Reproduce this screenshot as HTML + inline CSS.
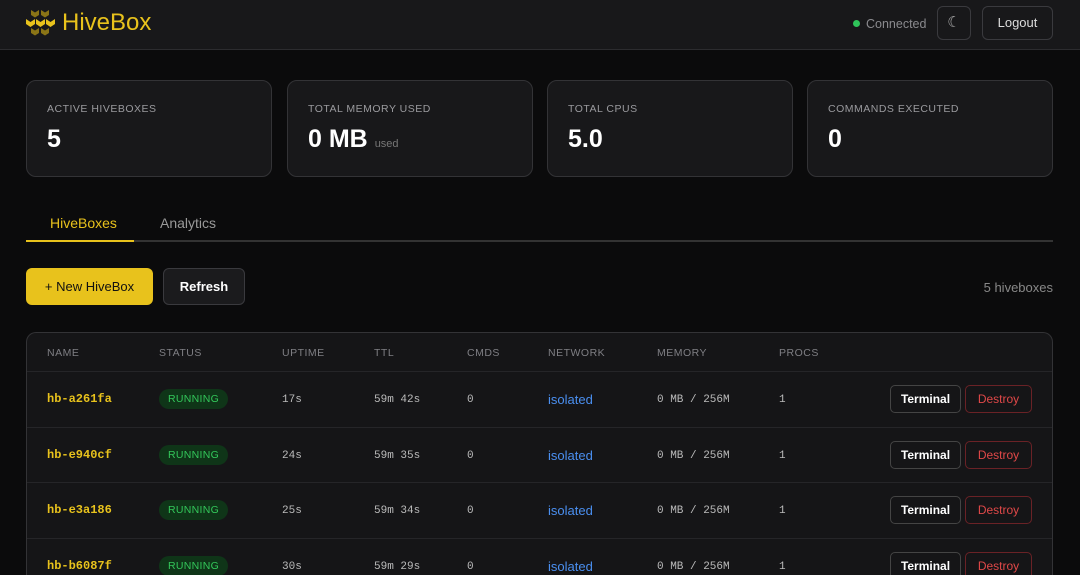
<!DOCTYPE html>
<html style="overflow:hidden;height:575px"><head><style>
*{box-sizing:border-box;margin:0;padding:0}
body{width:1080px;height:575px;overflow:hidden;background:#0b0b0c;font-family:"Liberation Sans",sans-serif;color:#eee;position:relative}
.hdr{height:50px;background:#18181a;border-bottom:1px solid #2c2c2f;position:relative}
.logo{position:absolute;left:26px;top:9px;display:flex;align-items:center}
.logo span{color:#e8c21c;font-size:24px;margin-left:6px}
.conn{position:absolute;left:853px;top:17px;font-size:12.5px;color:#8a8a8e}
.conn i{display:inline-block;width:7px;height:7px;border-radius:50%;background:#2fc45a;margin-right:6px;vertical-align:1px}
.btnm{position:absolute;left:937px;top:6px;width:34px;height:34px;border:1px solid #3a3a3e;border-radius:6px;color:#aaa;text-align:center;line-height:32px;font-size:15px}
.lo{position:absolute;left:982px;top:6px;width:71px;height:34px;border:1px solid #3a3a3e;border-radius:6px;color:#ddd;text-align:center;line-height:32px;font-size:13px}
.card{position:absolute;top:80px;width:246px;height:97px;background:#18181a;border:1px solid #333336;border-radius:10px;padding:22px 20px}
.card .l{font-size:10.5px;letter-spacing:.5px;color:#9a9a9e}
.card .v{font-size:25px;font-weight:bold;margin-top:10px;color:#fff}
.card .v small{font-size:11px;color:#777;font-weight:normal}
.tabs{position:absolute;left:26px;top:206px;width:1027px;height:36px;border-bottom:2px solid #333}
.tab{position:absolute;top:9px;font-size:14px}
.b1{position:absolute;left:26px;top:268px;width:127px;height:37px;background:#e8c21c;border-radius:6px;color:#111;font-size:13px;text-align:center;line-height:37px}
.b2{position:absolute;left:163px;top:268px;width:82px;height:37px;background:#1b1b1d;border:1px solid #3a3a3e;border-radius:6px;color:#fff;font-size:13px;font-weight:bold;text-align:center;line-height:35px}
.cnt{position:absolute;right:27px;top:280px;font-size:13px;color:#888}
.tbl{position:absolute;left:26px;top:332px;width:1027px;height:243px;background:#151517;border:1px solid #333336;border-bottom:none;border-radius:10px 10px 0 0;overflow:hidden}
.row{position:absolute;left:0;width:100%;border-bottom:1px solid #252528}
.row div{position:absolute}
.th{font-size:10.5px;letter-spacing:.5px;color:#7f7f84;top:14px}
.mono{font-family:"Liberation Mono",monospace;font-size:11px;color:#bbb}
.nm{font-family:"Liberation Mono",monospace;font-size:12px;font-weight:bold;color:#e8c21c}
.run{background:#0f3518;color:#33c75a;font-size:10.5px;letter-spacing:.3px;border-radius:10px;padding:4px 9px}
.iso{color:#4a8ff0;font-size:13px}
.term{border:1px solid #444;border-radius:5px;width:71px;height:28px;text-align:center;line-height:26px;font-size:12px;font-weight:bold;color:#fff}
.des{border:1px solid #6a2226;border-radius:5px;width:67px;height:28px;text-align:center;line-height:26px;font-size:12px;color:#e04848}
</style></head><body>
<div class="hdr">
<div class="logo"><svg width="30" height="28" viewBox="0 0 30 28"><g fill="#8a7416"><path d="M5 1l4 2.5 4-2.5v5l-4 2.5-4-2.5z"/><path d="M15 1l4 2.5 4-2.5v5l-4 2.5-4-2.5z"/><path d="M5 19l4 2.5 4-2.5v5l-4 2.5-4-2.5z"/><path d="M15 19l4 2.5 4-2.5v5l-4 2.5-4-2.5z"/></g><g fill="#e8c21c"><path d="M0 10l4.5 3 4.5-3v5l-4.5 3-4.5-3z"/><path d="M10 10l4.5 3 4.5-3v5l-4.5 3-4.5-3z"/><path d="M20 10l4.5 3 4.5-3v5l-4.5 3-4.5-3z"/></g></svg><span>HiveBox</span></div>
<div class="conn"><i></i>Connected</div>
<div class="btnm">☾</div>
<div class="lo">Logout</div>
</div>
<div class="card" style="left:26px"><div class="l">ACTIVE HIVEBOXES</div><div class="v">5</div></div>
<div class="card" style="left:287px"><div class="l">TOTAL MEMORY USED</div><div class="v">0 MB <small>used</small></div></div>
<div class="card" style="left:547px"><div class="l">TOTAL CPUS</div><div class="v">5.0</div></div>
<div class="card" style="left:807px"><div class="l">COMMANDS EXECUTED</div><div class="v">0</div></div>
<div class="tabs">
<div class="tab" style="left:24px;color:#e8c21c">HiveBoxes</div>
<div class="tab" style="left:134px;color:#999">Analytics</div>
<div style="position:absolute;left:0;bottom:-2px;width:108px;height:2px;background:#e8c21c"></div>
</div>
<div class="b1">+ New HiveBox</div>
<div class="b2">Refresh</div>
<div class="cnt">5 hiveboxes</div>
<div class="tbl">
<div class="row" style="top:0;height:39px">
<div class="th" style="left:20px">NAME</div><div class="th" style="left:132px">STATUS</div><div class="th" style="left:255px">UPTIME</div><div class="th" style="left:347px">TTL</div><div class="th" style="left:440px">CMDS</div><div class="th" style="left:521px">NETWORK</div><div class="th" style="left:630px">MEMORY</div><div class="th" style="left:752px">PROCS</div>
</div>
<div class="row" style="top:39px;height:56px"><div class="nm" style="left:20px;top:20px">hb-a261fa</div><div class="run" style="left:132px;top:17px">RUNNING</div><div class="mono" style="left:255px;top:22px">17s</div><div class="mono" style="left:347px;top:22px">59m 42s</div><div class="mono" style="left:440px;top:22px">0</div><div class="iso" style="left:521px;top:20px">isolated</div><div class="mono" style="left:630px;top:22px">0 MB / 256M</div><div class="mono" style="left:752px;top:22px">1</div><div class="term" style="left:863px;top:13px">Terminal</div><div class="des" style="left:938px;top:13px">Destroy</div></div>
<div class="row" style="top:95px;height:55px"><div class="nm" style="left:20px;top:20px">hb-e940cf</div><div class="run" style="left:132px;top:17px">RUNNING</div><div class="mono" style="left:255px;top:22px">24s</div><div class="mono" style="left:347px;top:22px">59m 35s</div><div class="mono" style="left:440px;top:22px">0</div><div class="iso" style="left:521px;top:20px">isolated</div><div class="mono" style="left:630px;top:22px">0 MB / 256M</div><div class="mono" style="left:752px;top:22px">1</div><div class="term" style="left:863px;top:13px">Terminal</div><div class="des" style="left:938px;top:13px">Destroy</div></div>
<div class="row" style="top:150px;height:56px"><div class="nm" style="left:20px;top:20px">hb-e3a186</div><div class="run" style="left:132px;top:17px">RUNNING</div><div class="mono" style="left:255px;top:22px">25s</div><div class="mono" style="left:347px;top:22px">59m 34s</div><div class="mono" style="left:440px;top:22px">0</div><div class="iso" style="left:521px;top:20px">isolated</div><div class="mono" style="left:630px;top:22px">0 MB / 256M</div><div class="mono" style="left:752px;top:22px">1</div><div class="term" style="left:863px;top:13px">Terminal</div><div class="des" style="left:938px;top:13px">Destroy</div></div>
<div class="row" style="top:206px;height:56px"><div class="nm" style="left:20px;top:20px">hb-b6087f</div><div class="run" style="left:132px;top:17px">RUNNING</div><div class="mono" style="left:255px;top:22px">30s</div><div class="mono" style="left:347px;top:22px">59m 29s</div><div class="mono" style="left:440px;top:22px">0</div><div class="iso" style="left:521px;top:20px">isolated</div><div class="mono" style="left:630px;top:22px">0 MB / 256M</div><div class="mono" style="left:752px;top:22px">1</div><div class="term" style="left:863px;top:13px">Terminal</div><div class="des" style="left:938px;top:13px">Destroy</div></div>
</div>
</body></html>
